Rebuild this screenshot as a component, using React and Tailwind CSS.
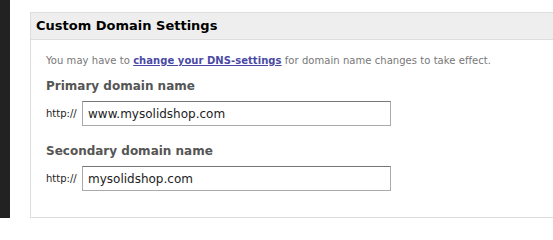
export default function App() {
  const fieldLabel = "text-[12px] font-bold text-[#555] leading-none";
  return (
    <div className="flex h-[218px] w-[553px] overflow-hidden bg-white font-['DejaVu_Sans',Verdana,sans-serif]">
      <div className="w-[10px] shrink-0 bg-[#222]" />
      <div className="flex-1 pl-[20px] pt-[12px]">
        <div className="w-[560px] border border-[#ddd] h-[206px]">
          <div className="h-[27px] bg-[#eee] border-b border-[#ddd] flex items-center px-[5px]">
            <h2 className="text-[13px] font-bold text-black">Custom Domain Settings</h2>
          </div>
          <div className="pl-[15px] pt-[16px]">
            <p className="text-[10px] text-[#777] leading-none tracking-[0.05px]">
              You may have to{" "}
              <a href="#" className="font-bold text-[#4a4aa5] underline">change your DNS-settings</a>{" "}
              for domain name changes to take effect.
            </p>
            <div className="mt-[14px]">
              <div className={fieldLabel}>Primary domain name</div>
              <div className="mt-[9px] flex items-center gap-[2px]">
                <span className="text-[10px] text-[#222] w-[34px]">http://</span>
                <input
                  defaultValue="www.mysolidshop.com"
                  className="h-[25px] w-[309px] border border-[#aaa] border-t-[#777] px-[5px] text-[12px] text-[#222] outline-none"
                />
              </div>
            </div>
            <div className="mt-[19px]">
              <div className={fieldLabel}>Secondary domain name</div>
              <div className="mt-[9px] flex items-center gap-[2px]">
                <span className="text-[10px] text-[#222] w-[34px]">http://</span>
                <input
                  defaultValue="mysolidshop.com"
                  className="h-[25px] w-[309px] border border-[#aaa] border-t-[#777] px-[5px] text-[12px] text-[#222] outline-none"
                />
              </div>
            </div>
          </div>
        </div>
      </div>
    </div>
  );
}
